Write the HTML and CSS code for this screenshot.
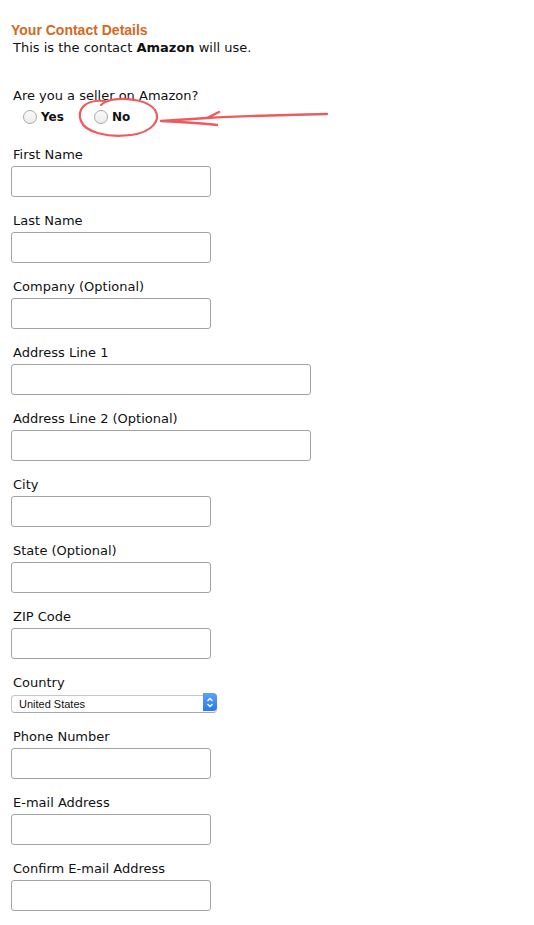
FILE: index.html
```html
<!DOCTYPE html>
<html lang="en">
<head>
    <meta charset="UTF-8">
    <title>Your Contact Details</title>
    <link rel="stylesheet" href="styles.css">
</head>
<body>
    <div class="contact-form">
        <h3 class="form-title">Your Contact Details</h3>
        <p class="form-intro">This is the contact <b>Amazon</b> will use.</p>

        <div class="seller-question">
            <p class="question-text">Are you a seller on Amazon?</p>
            <div class="radio-row">
                <label class="radio-option"><input type="radio" name="seller" class="radio"> Yes</label>
                <label class="radio-option"><input type="radio" name="seller" class="radio"> No</label>
            </div>
            <!-- hand-drawn annotation on top of the form -->
            <svg class="annotation" width="330" height="50" viewBox="0 0 330 50">
                <path d="M94 5 C72 3 66 15 70 25 C74 36 96 42 120 39 C142 36 150 24 144 14 C138 5 118 1 100 4 C96 5 92 7 90 9"
                      fill="none" stroke="#ee5a5e" stroke-width="2.2" stroke-linecap="round"/>
                <path d="M316 18 C270 19 230 20 196 22 L208 16 M196 22 C180 23 165 24 150 25 C170 26 190 27 206 29"
                      fill="none" stroke="#ee5a5e" stroke-width="2.4" stroke-linecap="round" stroke-linejoin="round"/>
            </svg>
        </div>

        <div class="field">
            <label class="field-label">First Name</label>
            <input type="text" class="text-input">
        </div>
        <div class="field">
            <label class="field-label">Last Name</label>
            <input type="text" class="text-input">
        </div>
        <div class="field">
            <label class="field-label">Company (Optional)</label>
            <input type="text" class="text-input">
        </div>
        <div class="field">
            <label class="field-label">Address Line 1</label>
            <input type="text" class="text-input wide">
        </div>
        <div class="field">
            <label class="field-label">Address Line 2 (Optional)</label>
            <input type="text" class="text-input wide">
        </div>
        <div class="field">
            <label class="field-label">City</label>
            <input type="text" class="text-input">
        </div>
        <div class="field">
            <label class="field-label">State (Optional)</label>
            <input type="text" class="text-input">
        </div>
        <div class="field">
            <label class="field-label">ZIP Code</label>
            <input type="text" class="text-input">
        </div>
        <div class="field field-select">
            <label class="field-label">Country</label>
            <div class="select-wrap">
                <select class="country-select">
                    <option>United States</option>
                </select>
                <span class="select-arrows">
                    <svg width="8" height="11" viewBox="0 0 8 11">
                        <path d="M1.5 4 L4 1.5 L6.5 4 M1.5 7 L4 9.5 L6.5 7" fill="none" stroke="#fff" stroke-width="1.3"/>
                    </svg>
                </span>
            </div>
        </div>
        <div class="field">
            <label class="field-label">Phone Number</label>
            <input type="text" class="text-input">
        </div>
        <div class="field">
            <label class="field-label">E-mail Address</label>
            <input type="text" class="text-input">
        </div>
        <div class="field">
            <label class="field-label">Confirm E-mail Address</label>
            <input type="text" class="text-input">
        </div>
    </div>
</body>
</html>
```

FILE: styles.css
```css
body{
    margin: 0;
    background-color: #fff;
    font-family: "DejaVu Sans", Verdana, sans-serif;
    color: #111;
}
.contact-form{
    padding: 22px 0 0 11px;
}
.form-title{
    margin: 0;
    font-family: "Liberation Sans", Arial, sans-serif;
    font-size: 14px;
    font-weight: bold;
    line-height: 16px;
    color: #d2691e;
}
.form-intro{
    margin: 2px 0 0 2px;
    font-size: 13px;
    line-height: 16px;
}
.seller-question{
    position: relative;
    margin-top: 32px;
}
.question-text{
    margin: 0 0 0 2px;
    font-size: 13px;
    line-height: 16px;
}
.radio-row{
    display: flex;
    gap: 30px;
    margin: 2px 0 0 12px;
    height: 22px;
}
.radio-option{
    display: flex;
    align-items: center;
    gap: 4px;
    font-size: 12px;
    font-weight: bold;
}
.radio{
    appearance: none;
    width: 14px;
    height: 14px;
    margin: 0;
    border: 1px solid #a8a8a8;
    border-radius: 50%;
    background: linear-gradient(#fafafa, #ececec);
}
.annotation{
    position: absolute;
    left: 0;
    top: 8px;
    pointer-events: none;
}
.field{
    margin-top: 16px;
}
.seller-question + .field{
    margin-top: 19px;
}
.field-label{
    display: block;
    margin: 0 0 3px 2px;
    font-size: 13px;
    line-height: 16px;
}
.text-input{
    display: block;
    box-sizing: border-box;
    width: 200px;
    height: 31px;
    margin: 0;
    border: 1px solid #a3a3a3;
    border-radius: 3px;
    background-color: #fff;
}
.text-input.wide{
    width: 300px;
}
.field-select .field-label{
    margin-bottom: 2px;
}
.field-select + .field{
    margin-top: 18px;
}
.select-wrap{
    position: relative;
    width: 206px;
    height: 18px;
}
.country-select{
    appearance: none;
    box-sizing: border-box;
    width: 206px;
    height: 18px;
    margin: 0;
    padding: 0 0 0 7px;
    border: 1px solid #c6c6c6;
    border-bottom-color: #a9a9a9;
    border-radius: 4px;
    background-color: #fff;
    font-family: "Liberation Sans", Arial, sans-serif;
    font-size: 11px;
    color: #111;
}
.select-arrows{
    position: absolute;
    right: 0;
    top: 0;
    width: 14px;
    height: 18px;
    display: flex;
    align-items: center;
    justify-content: center;
    border-radius: 0 4px 4px 0;
    background: linear-gradient(#5aa2fb, #2a78f0);
}
```
